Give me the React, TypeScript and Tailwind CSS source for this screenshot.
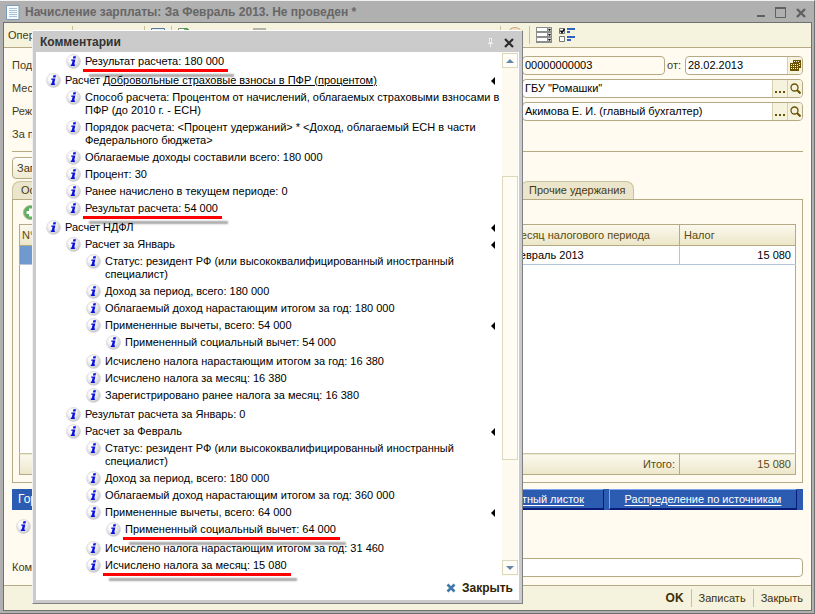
import React from "react";

interface Note {
  text: React.ReactNode;
  marked?: boolean;
  children?: Note[];
}

const notes: Note[] = [
  {
    text: (
      <>
        Расчет <span className="underline">Добровольные страховые взносы в ПФР (процентом)</span>
      </>
    ),
    children: [
      {
        text: (
          <>
            Способ расчета: Процентом от начислений, облагаемых страховыми взносами в
            <br />
            ПФР (до 2010 г. - ЕСН)
          </>
        ),
      },
      {
        text: (
          <>
            Порядок расчета: &lt;Процент удержаний&gt; * &lt;Доход, облагаемый ЕСН в части
            <br />
            Федерального бюджета&gt;
          </>
        ),
      },
      { text: "Облагаемые доходы составили всего: 180 000" },
      { text: "Процент: 30" },
      { text: "Ранее начислено в текущем периоде: 0" },
      { text: "Результат расчета: 54 000", marked: true },
    ],
  },
  {
    text: "Расчет НДФЛ",
    children: [
      {
        text: "Расчет за Январь",
        children: [
          {
            text: (
              <>
                Статус: резидент РФ (или высококвалифицированный иностранный
                <br />
                специалист)
              </>
            ),
          },
          { text: "Доход за период, всего: 180 000" },
          { text: "Облагаемый доход нарастающим итогом за год: 180 000" },
          {
            text: "Примененные вычеты, всего: 54 000",
            children: [{ text: "Примененный социальный вычет: 54 000" }],
          },
          { text: "Исчислено налога нарастающим итогом за год: 16 380" },
          { text: "Исчислено налога за месяц: 16 380" },
          { text: "Зарегистрировано ранее налога за месяц: 16 380" },
        ],
      },
      { text: "Результат расчета за Январь: 0" },
      {
        text: "Расчет за Февраль",
        children: [
          {
            text: (
              <>
                Статус: резидент РФ (или высококвалифицированный иностранный
                <br />
                специалист)
              </>
            ),
          },
          { text: "Доход за период, всего: 180 000" },
          { text: "Облагаемый доход нарастающим итогом за год: 360 000" },
          {
            text: "Примененные вычеты, всего: 64 000",
            children: [{ text: "Примененный социальный вычет: 64 000", marked: true }],
          },
          { text: "Исчислено налога нарастающим итогом за год: 31 460" },
          { text: "Исчислено налога за месяц: 15 080", marked: true },
        ],
      },
    ],
  },
];

const InfoIcon: React.FC = () => (
  <svg width="15" height="15" viewBox="0 0 15 15" className="shrink-0">
    <defs>
      <radialGradient id="info" cx="0.4" cy="0.35" r="0.7">
        <stop offset="0.3" stopColor="#fdfdfd" />
        <stop offset="1" stopColor="#c2c2c8" />
      </radialGradient>
    </defs>
    <circle cx="7.5" cy="7.5" r="7" fill="url(#info)" stroke="#d4d4d8" strokeWidth="0.6" />
    <path d="M7.400 2.200h2.600l-.5 2.200H6.900z" fill="#0a12dc" />
    <path d="M5.400 5.400h4L8.200 10.600h.9l-.3 1.400H4.700l.3-1.400h.7l.9-3.800H5.100z" fill="#0a12dc" />
  </svg>
);

const NoteRow: React.FC<{ note: Note }> = ({ note }) => (
  <li>
    <div className="flex items-start">
      <span className="flex h-[17px] w-5 shrink-0 items-center pl-px">
        <InfoIcon />
      </span>
      <span className="relative whitespace-nowrap py-0.5">
        {note.text}
        {note.marked && (
          <span className="absolute -left-0.5 -right-1 top-4 z-10 h-[3px] bg-[#fe0000] shadow-[6px_5px_2px_rgba(0,0,0,0.35)]" />
        )}
      </span>
      {note.children && (
        <button type="button" aria-label="Свернуть" className="ml-auto flex h-[17px] items-center">
          <svg width="4" height="8" viewBox="0 0 4 8">
            <path d="M4 0v8L0 4z" fill="#000" />
          </svg>
        </button>
      )}
    </div>
    {note.children && <NoteList notes={note.children} />}
  </li>
);

const NoteList: React.FC<{ notes: Note[] }> = ({ notes }) => (
  <ul className="mb-0.5 pl-5">
    {notes.map((note, i) => (
      <NoteRow key={i} note={note} />
    ))}
  </ul>
);

const ScrollBar: React.FC = () => (
  <div className="flex w-4 shrink-0 flex-col bg-[#fefaf0] py-px">
    <button type="button" aria-label="Вверх" className="flex h-[15px] items-center justify-center border border-[#dcd8bc] bg-[#fffdf8]">
      <svg width="8" height="4" viewBox="0 0 8 4">
        <path d="M4 0l4 4H0z" fill="#6486a8" />
      </svg>
    </button>
    <div className="grow-[108]" />
    <div className="grow-[283] border border-[#dcd8bc] bg-[#fffcf3]" />
    <div className="grow-[100]" />
    <button type="button" aria-label="Вниз" className="flex h-[15px] items-center justify-center border border-[#dcd8bc] bg-[#fffdf8]">
      <svg width="8" height="4" viewBox="0 0 8 4">
        <path d="M0 0h8L4 4z" fill="#6486a8" />
      </svg>
    </button>
  </div>
);

const CommentsDialog: React.FC = () => (
  <section
    role="dialog"
    aria-label="Комментарии"
    className="absolute bottom-[9px] left-8 top-[29px] z-20 flex w-[491px] flex-col border border-b-[#808080] border-l-[#f0f0f0] border-r-[#808080] border-t-white bg-[#cbcbcb] pb-[3px] pl-[3px] pr-[3px] text-black"
  >
    <header className="flex h-[21px] shrink-0 items-center pl-1 pr-1 pt-0.5">
      <h2 className="text-[12px] font-bold text-[#333]">Комментарии</h2>
      <svg width="5" height="9" viewBox="0 0 5 9" className="ml-auto">
        <path d="M1 0h3v5H1zM0 5h5v1H0zM2 6h1v3H2z" fill="#efefef" />
        <path d="M2 1h1v3H2z" fill="#bbb" />
      </svg>
      <button type="button" aria-label="Закрыть окно" className="ml-2.5">
        <svg width="12" height="12" viewBox="0 0 12 12">
          <path d="M2 2l8 8M10 2l-8 8" stroke="#2b2b2b" strokeWidth="2.2" />
        </svg>
      </button>
    </header>
    <div className="flex min-h-0 flex-1 bg-white">
      <div className="min-w-0 flex-1 pl-[9px] pr-[7px] pt-px text-[11px] leading-[13px]">
        <NoteList notes={[{ text: "Результат расчета: 180 000", marked: true }]} />
        <ul>
          {notes.map((note, i) => (
            <NoteRow key={i} note={note} />
          ))}
        </ul>
      </div>
      <ScrollBar />
      <div className="w-px bg-white" />
    </div>
    <footer className="flex h-6 shrink-0 items-center justify-end bg-white pr-1.5">
      <button type="button" className="flex items-center gap-1.5 text-[12px] font-bold text-[#2e2405]">
        <svg width="10" height="10" viewBox="0 0 10 10">
          <path d="M1.5 1.5l7 7M8.5 1.5l-7 7" stroke="#3f7ba6" strokeWidth="2.6" />
        </svg>
        Закрыть
      </button>
    </footer>
  </section>
);

const TitleBar: React.FC = () => (
  <header className="flex h-[21px] shrink-0 items-center bg-[#b0b0b0] pl-[3px] pr-1.5 pt-0.5">
    <svg width="14" height="15" viewBox="0 0 14 15">
      <path d="M.5.5h12.500v14H.5z" fill="#f6fafd" stroke="#7d9cb8" />
      <path d="M3 3.500h8M3 5.500h8M3 7.500h8M3 9.500h8M3 11.500h8" stroke="#a9c3d8" />
    </svg>
    <h1 className="ml-[5px] whitespace-nowrap text-[12px] font-bold text-[#666]">
      Начисление зарплаты: За Февраль 2013. Не проведен *
    </h1>
    <div className="ml-auto flex items-center gap-2.5 text-[#606060]">
      <button type="button" aria-label="Свернуть окно">
        <svg width="8" height="10" viewBox="0 0 8 10">
          <path d="M0 7h8v2H0z" fill="currentColor" />
        </svg>
      </button>
      <button type="button" aria-label="Развернуть окно">
        <svg width="11" height="11" viewBox="0 0 11 11">
          <path d="M.5 1h10v9.500H.5z" fill="none" stroke="currentColor" />
          <path d="M0 0h11v2H0z" fill="currentColor" />
        </svg>
      </button>
      <button type="button" aria-label="Закрыть документ">
        <svg width="10" height="10" viewBox="0 0 10 10">
          <path d="M1 1l8 8M9 1l-8 8" stroke="currentColor" strokeWidth="2.4" />
        </svg>
      </button>
    </div>
  </header>
);

const Divider: React.FC = () => <span className="h-[18px] w-px bg-[#c9c09a]" />;

const Toolbar: React.FC = () => (
  <div className="flex h-[25px] shrink-0 items-center border-b border-[#b5aa84] bg-[#f5f2dd] pl-1">
    <button type="button" className="w-16 text-left">Опер</button>
    <Divider />
    <span className="w-[71px]" />
    <Divider />
    <svg width="14" height="14" viewBox="0 0 14 14" className="ml-1.5">
      <path d="M.5.5h13v13H.5z" fill="#e4eef8" stroke="#54779a" />
    </svg>
    <span className="ml-1.5 flex items-center gap-1.5">
      <Divider />
      <svg width="14" height="14" viewBox="0 0 14 14">
        <path d="M.5.5h9l4 4v9H.5z" fill="#fff" stroke="#7d8f6e" />
        <path d="M6 1l3 0 3 4" stroke="#3f9f3f" strokeWidth="1.500" fill="none" />
      </svg>
    </span>
    <svg width="13" height="14" viewBox="0 0 13 14" className="ml-[61px]">
      <path d="M0 0h13v14H0z" fill="#b5b2a8" />
    </svg>
    <span className="ml-[234px] flex items-center gap-1.5">
      <Divider />
      <svg width="16" height="16" viewBox="0 0 16 16">
        <circle cx="8" cy="8" r="7.500" fill="#f8e4c8" stroke="#c9a27c" />
      </svg>
    </span>
    <span className="ml-1.5 mr-1.5 flex">
      <Divider />
    </span>
    <button type="button" aria-label="Список">
      <svg width="16" height="16" viewBox="0 0 16 16">
        <path d="M0 0h16v16H0z" fill="#8d8d8d" />
        <path d="M1 1h10v3H1zM1 6h10v3H1zM1 11h10v3H1z" fill="#fff" />
        <path d="M12 1h3v3h-3zM12 6h3v3h-3zM12 11h3v3h-3z" fill="#d0d0d0" />
        <path d="M12 2h3l-1.500 2zM12 7h3l-1.500 2zM12 12h3l-1.500 2z" fill="#111" />
      </svg>
    </button>
    <button type="button" aria-label="Настройка списка" className="ml-[7px]">
      <svg width="16" height="16" viewBox="0 0 16 16">
        <path d="M.5 1.500h5v5h-5zM.5 9.500h5v5h-5z" fill="#fff" stroke="#777" />
        <path d="M1.500 3.500l1.500 2 2.500-3.500" stroke="#000" strokeWidth="1.400" fill="none" />
        <path d="M8 1h8v2H8zM8 4h3v2H8zM8 9h8v2H8zM8 12h4v2H8z" fill="#2f62c4" />
      </svg>
    </button>
  </div>
);

const fieldBox = "flex h-[19px] min-w-0 overflow-hidden rounded border border-[#b5aa84]";
const fieldButton = "flex w-[15px] shrink-0 items-center justify-center border-l border-[#d8d0ac] bg-[#f5f2dd] text-[#6b5200]";

const LookupField: React.FC<{ label: string; value: string }> = ({ label, value }) => (
  <div className={`${fieldBox} flex-1 bg-white`}>
    <input aria-label={label} defaultValue={value} className="min-w-0 flex-1 bg-transparent pl-0.5 text-black outline-none" />
    <button type="button" aria-label={`${label}: выбрать`} className={fieldButton}>
      <svg width="10" height="10" viewBox="0 0 10 10">
        <path d="M0 7h2v2H0zM4 7h2v2H4zM8 7h2v2H8z" fill="currentColor" />
      </svg>
    </button>
    <button type="button" aria-label={`${label}: открыть`} className={fieldButton}>
      <svg width="11" height="11" viewBox="0 0 11 11">
        <circle cx="4.500" cy="4.500" r="3.500" fill="none" stroke="currentColor" strokeWidth="1.300" />
        <path d="M7 7l3.500 3.500" stroke="currentColor" strokeWidth="2" />
      </svg>
    </button>
  </div>
);

const FormRow: React.FC<{ id: string; label: string; children?: React.ReactNode }> = ({ id, label, children }) => (
  <div className="flex h-[19px] items-center">
    <label htmlFor={id} className="w-24 shrink-0">{label}</label>
    <input id={id} className="h-[19px] min-w-0 flex-1 rounded border border-[#b5aa84] bg-white" />
    <div className="ml-16 flex w-[281px] shrink-0 items-center">{children}</div>
  </div>
);

const tab = "flex h-[18px] items-center rounded-t-lg border border-b-0 border-[#c9c2a0] bg-[#ebe5cb] px-2";
const gradient = "bg-linear-to-b from-[#fbf9ee] to-[#ece6c8]";

const TaxTable: React.FC = () => (
  <table className="w-full grow table-fixed border-collapse border border-[#b5aa84] bg-white">
    <colgroup>
      <col className="w-10" />
      <col />
      <col className="w-[172px]" />
      <col className="w-[116px]" />
    </colgroup>
    <thead>
      <tr className={`h-[21px] ${gradient} border-b border-[#b5aa84] text-left text-[#5e4a0c]`}>
        <th className="pl-0.5 font-normal">N°</th>
        <th />
        <th className="whitespace-nowrap pl-1 font-normal">Месяц налогового периода</th>
        <th className="border-l border-[#b5aa84] pl-1 font-normal">Налог</th>
      </tr>
    </thead>
    <tbody>
      <tr className="h-[19px] border-b border-[#b4c6dc] text-black">
        <td className="bg-[#7099d0]" />
        <td />
        <td className="pl-1">Февраль 2013</td>
        <td className="border-l border-[#b4c6dc] pr-1 text-right">15 080</td>
      </tr>
      <tr>
        <td colSpan={4} />
      </tr>
    </tbody>
    <tfoot>
      <tr className={`h-[21px] ${gradient} border-t border-[#c9c6a8] text-[#5e4a0c]`}>
        <td colSpan={3} className="pr-1 text-right">Итого:</td>
        <td className="border-l border-[#b5aa84] pr-1 text-right">15 080</td>
      </tr>
    </tfoot>
  </table>
);

const blueLink =
  "flex items-center justify-center border border-b-2 border-b-[#0a1c78] border-l-[#7ea6ee] border-r-[#0a1c78] border-t-[#7ea6ee] underline underline-offset-2";

export default function App() {
  return (
    <div className="relative flex min-h-screen flex-col border-r border-t border-b border-b-[#707070] border-r-[#707070] border-t-[#f0f0f0] bg-[#b0b0b0] pb-0.5 pl-[3px] pr-0.5 font-['Liberation_Sans',sans-serif] text-[11px] leading-[13px] text-[#463a12]">
      <TitleBar />
      <main className="flex flex-1 flex-col border border-[#707070] bg-[#fffbf0]">
        <Toolbar />
        <div className="flex flex-1 flex-col pl-2 pr-2">
          <div className="flex flex-col gap-1 pt-2">
            <FormRow id="department" label="Подразделение:">
              <div className={`${fieldBox} w-[143px]`}>
                <input aria-label="Номер" defaultValue="00000000003" className="min-w-0 flex-1 bg-transparent pl-0.5 text-black outline-none" />
              </div>
              <label htmlFor="date" className="pl-0.5">от:</label>
              <div className={`${fieldBox} ml-auto w-[118px] bg-white`}>
                <input id="date" defaultValue="28.02.2013" className="min-w-0 flex-1 bg-transparent pl-0.5 text-black outline-none" />
                <button type="button" aria-label="Календарь" className={fieldButton}>
                  <svg width="11" height="11" viewBox="0 0 11 11">
                    <path d="M3 0h8v8H9v3H0V3h3z" fill="currentColor" />
                    <path d="M4 1h1v1H4zM6 1h1v1H6zM8 1h1v1H8zM1 4h1v1H1zM3 4h1v1H3zM5 4h1v1H5zM7 4h1v1H7zM1 6h1v1H1zM3 6h1v1H3zM5 6h1v1H5zM7 6h1v1H7zM1 8h1v1H1zM3 8h1v1H3zM5 8h1v1H5zM7 8h1v1H7zM9 3h1v1H9zM9 5h1v1H9z" fill="#f5f2dd" />
                  </svg>
                </button>
              </div>
            </FormRow>
            <FormRow id="month" label="Месяц:">
              <LookupField label="Организация" value={'ГБУ "Ромашки"'} />
            </FormRow>
            <FormRow id="mode" label="Режим:">
              <LookupField label="Ответственный" value="Акимова Е. И. (главный бухгалтер)" />
            </FormRow>
            <FormRow id="period" label="За период:" />
          </div>
          <hr className="mt-[7px] border-[#b5aa84]" />
          <button type="button" className="mt-[5px] h-[22px] w-24 rounded border border-[#b5aa84] bg-linear-to-b from-white to-[#f0ead0] pl-1 text-left">
            Заполнить
          </button>
          <div className="mt-0.5 flex" role="tablist">
            <button type="button" role="tab" className={`${tab} w-[200px]`}>Осн</button>
            <button type="button" role="tab" aria-label="НДФЛ" className={`${tab} w-[308px]`} />
            <button type="button" role="tab" className={tab}>Прочие удержания</button>
          </div>
          <div className="flex flex-1 flex-col border border-[#b5aa84] px-1.5 pb-[7px]">
            <div className="flex h-6 items-center pl-1">
              <button type="button" aria-label="Добавить">
                <svg width="15" height="15" viewBox="0 0 15 15">
                  <circle cx="7.500" cy="7.500" r="7" fill="#5fae5f" stroke="#a8b8a0" />
                  <path d="M6 3.500h3V6h2.500v3H9v2.500H6V9H3.500V6H6z" fill="#fff" />
                </svg>
              </button>
            </div>
            <TaxTable />
          </div>
          <nav className="mt-1.5 flex h-[21px] shrink-0 justify-end gap-[5px] bg-[#2c5cb2] pr-1.5 text-white">
            <span className="mr-auto flex items-center pl-1.5 text-[12px]">Горячие ссылки</span>
            <a href="#payslip" className={`${blueLink} w-[132px]`}>Расчетный листок</a>
            <a href="#sources" className={`${blueLink} w-[188px]`}>Распределение по источникам</a>
          </nav>
          <div className="flex h-8 items-center pl-1">
            <InfoIcon />
          </div>
          <div className="mb-2 mt-4 flex items-center">
            <label htmlFor="comment" className="w-24 shrink-0">Комментарий:</label>
            <input id="comment" className="h-[19px] min-w-0 flex-1 rounded border border-[#b5aa84] bg-white" />
          </div>
        </div>
        <footer className="flex h-[25px] shrink-0 items-center justify-end gap-[7px] border-t border-[#b5aa84] bg-[#f5f2dd] pr-2 text-[#3c300a]">
          <button type="button" className="text-[12px] font-bold">OK</button>
          <Divider />
          <button type="button">Записать</button>
          <Divider />
          <button type="button">Закрыть</button>
        </footer>
      </main>
      <CommentsDialog />
    </div>
  );
}
